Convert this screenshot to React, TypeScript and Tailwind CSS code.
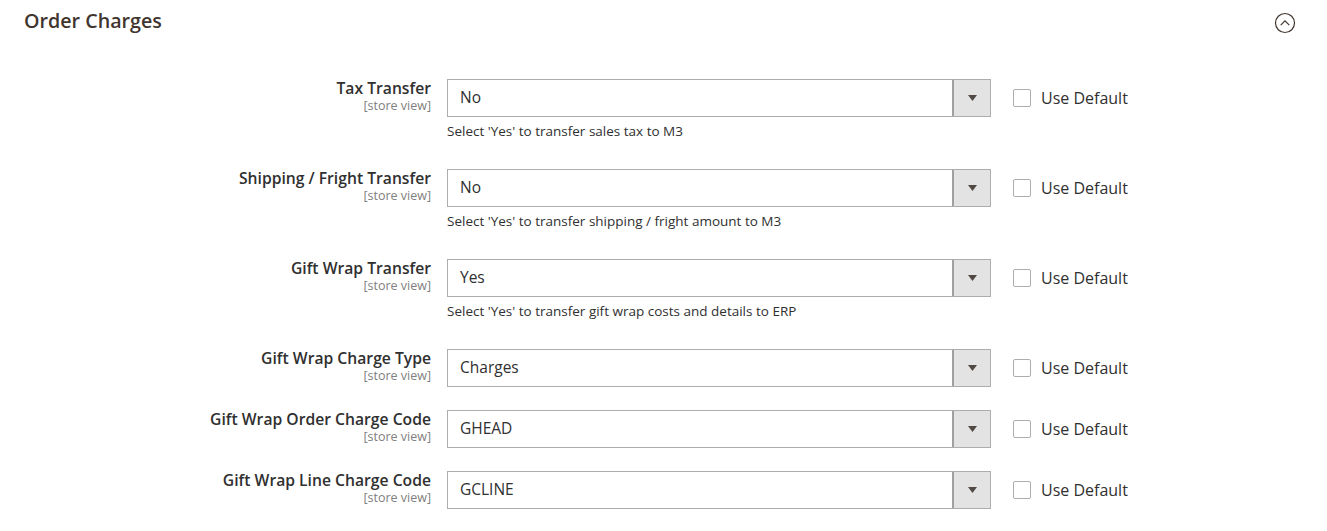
const rows = [
  {label: 'Tax Transfer', value: 'No', note: "Select 'Yes' to transfer sales tax to M3"},
  {label: 'Shipping / Fright Transfer', value: 'No', note: "Select 'Yes' to transfer shipping / fright amount to M3"},
  {label: 'Gift Wrap Transfer', value: 'Yes', note: "Select 'Yes' to transfer gift wrap costs and details to ERP"},
  {label: 'Gift Wrap Charge Type', value: 'Charges'},
  {label: 'Gift Wrap Order Charge Code', value: 'GHEAD'},
  {label: 'Gift Wrap Line Charge Code', value: 'GCLINE'},
]

function Field({label, value, note}: {label: string; value: string; note?: string}) {
  return (
    <div className="flex items-start pb-[23px]">
      <div className="w-[431px] shrink-0 text-right">
        <div className="text-[15.7px] font-semibold leading-[19px] text-[#303030]">{label}</div>
        <div className="text-[12.5px] leading-[15px] text-[#808080]">[store view]</div>
      </div>
      <div className="ml-[16px] w-[544px] shrink-0">
        <div className="flex h-[38px] border border-[#adadad] bg-white">
          <div className="flex flex-1 items-center pl-[12px] text-[15.5px] text-[#303030]">{value}</div>
          <div className="flex w-[38px] items-center justify-center border-l-2 border-[#a0a0a0] bg-[#e3e3e3]">
            <svg width="9" height="6" viewBox="0 0 9 6">
              <path d="M0 0h9L4.5 6z" fill="#514943" />
            </svg>
          </div>
        </div>
        {note ? (
          <div className="mt-[5px] mb-[6px] text-[13.5px] leading-[18px] text-[#303030]">{note}</div>
        ) : null}
      </div>
      <div className="ml-[22px] flex h-[38px] items-center">
        <div className="h-[18px] w-[18px] rounded-[2px] border border-[#adadad] bg-white" />
        <span className="ml-[10px] text-[16px] text-[#303030]">Use Default</span>
      </div>
    </div>
  )
}

export default function App() {
  return (
    <div className="h-[531px] w-[1327px] overflow-hidden bg-white" style={{fontFamily: '"Open Sans", Arial, sans-serif'}}>
      <div className="flex items-center justify-between pt-[7px] pl-[24px] pr-[31px]">
        <h2 className="text-[19.7px] font-semibold leading-[28px] text-[#41362f]">Order Charges</h2>
        <svg width="22" height="22" viewBox="0 0 22 22" className="mt-[3px]">
          <circle cx="11" cy="11" r="9.5" fill="none" stroke="#41362f" strokeWidth="1.2" />
          <path d="M6.7 13.2L11 8.9l4.3 4.3" fill="none" stroke="#41362f" strokeWidth="1.2" />
        </svg>
      </div>
      <div className="mt-[44px]">
        {rows.map((r) => (
          <Field key={r.label} {...r} />
        ))}
      </div>
    </div>
  )
}
